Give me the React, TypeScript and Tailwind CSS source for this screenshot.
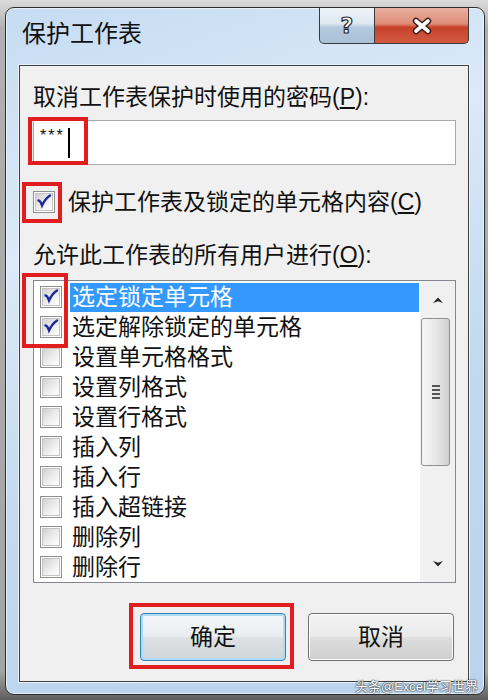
const items = [
  "选定锁定单元格",
  "选定解除锁定的单元格",
  "设置单元格格式",
  "设置列格式",
  "设置行格式",
  "插入列",
  "插入行",
  "插入超链接",
  "删除列",
  "删除行",
];

function CheckBox({ checked }: { checked?: boolean }) {
  return (
    <span className="flex h-[22px] w-[22px] shrink-0 items-center justify-center border border-[#8e8f8f] bg-white">
      <span className="flex h-[18px] w-[18px] items-center justify-center border border-[#c4c4c4] bg-gradient-to-br from-[#d0d0d0] via-[#ececec] to-white">
        {checked && (
          <svg width="16" height="16" viewBox="0 0 16 16">
            <path
              d="M2.5 6.5 Q4.5 6.8 6 11.5 Q9 5 14 1.5"
              fill="none"
              stroke="#1e2a9c"
              strokeWidth="2.4"
              strokeLinecap="round"
            />
          </svg>
        )}
      </span>
    </span>
  );
}

function RedBox({ className }: { className: string }) {
  return <div className={`pointer-events-none absolute border-4 border-[#e11d1d] ${className}`} />;
}

export default function App() {
  return (
    <div className="h-[700px] w-[488px] overflow-hidden bg-[linear-gradient(#dcdcdc,#b0b0b0_4%,#a4a4a4_96%,#5e5e5e)] pl-[5px] pt-[7px] font-['Liberation_Sans','Noto_Sans_CJK_SC',sans-serif] text-[#111]">
      <div className="relative flex h-[688px] w-[480px] flex-col rounded-[9px] border border-[#2e2e2e] bg-[linear-gradient(160deg,#c6dcf2,#dbe9f8_30%,#c2d9f0_60%,#b9d3ee)] shadow-[inset_0_0_0_1px_rgba(255,255,255,0.55)]">
        {/* Title bar */}
        <div className="flex h-[57px] shrink-0 items-start">
          <div className="pl-[16px] pt-[11px] text-[24px] leading-[30px]">保护工作表</div>
          <div className="ml-auto mr-[15px] flex h-[36px]">
            <div className="flex w-[56px] items-center justify-center rounded-bl-[5px] border border-t-0 border-[#3a3a3a] bg-[linear-gradient(#eef3f8,#dfe8f1_45%,#b4c9dd_55%,#a9c0d6)]">
              <span className="font-['DejaVu_Sans',sans-serif] text-[22px] font-bold leading-none text-white [-webkit-text-stroke:1.2px_#2a2a2a]">
                ?
              </span>
            </div>
            <div className="flex w-[94px] items-center justify-center rounded-br-[5px] border border-l-0 border-t-0 border-[#3a3a3a] bg-[linear-gradient(#eab0a2,#df8c78_45%,#c7412a_55%,#d15a41)]">
              <svg width="22" height="18" viewBox="0 0 22 18">
                <path d="M5 4 L17 14 M17 4 L5 14" stroke="#3b1a14" strokeWidth="6.5" strokeLinecap="round" />
                <path d="M5 4 L17 14 M17 4 L5 14" stroke="#ffffff" strokeWidth="3.6" strokeLinecap="round" />
              </svg>
            </div>
          </div>
        </div>

        {/* Client area */}
        <div className="ml-[13px] flex h-[617px] w-[450px] flex-col border border-[#404040] bg-[#f0f0f0] pl-[13px] pr-[12px] shadow-[0_0_0_1px_#e9f2fb]">
          <div className="mt-[16px] text-[23px] leading-[30px]">
            取消工作表保护时使用的密码(<span className="underline underline-offset-2">P</span>):
          </div>

          <div className="relative mt-[8px] flex h-[45px] items-start border border-[#a7a9ae] bg-white pl-[6px] pt-[7px]">
            <span className="text-[16px] leading-[16px] tracking-[2px]">***</span>
            <span className="ml-[3px] mt-[0px] h-[30px] w-[2px] bg-black" />
            <RedBox className="left-[-6px] top-[-4px] h-[48px] w-[60px]" />
          </div>

          <div className="relative mt-[22px] flex h-[30px] items-center gap-[13px]">
            <CheckBox checked />
            <span className="text-[23px] leading-[30px]">
              保护工作表及锁定的单元格内容(<span className="underline underline-offset-2">C</span>)
            </span>
            <RedBox className="left-[-11px] top-[-5px] h-[41px] w-[40px]" />
          </div>

          <div className="mt-[23px] text-[23px] leading-[30px]">
            允许此工作表的所有用户进行(<span className="underline underline-offset-2">O</span>):
          </div>

          <div className="relative mt-[10px] flex h-[303px] border border-[#828790] bg-white">
            <div className="flex flex-1 flex-col pt-[1px]">
              {items.map((item, i) => (
                <div key={item} className="flex h-[30px] items-center pl-[6px]">
                  <CheckBox checked={i < 2} />
                  <span
                    className={`ml-[8px] mr-[1px] flex h-[29px] flex-1 items-center pl-[2px] text-[23px] leading-[29px] ${
                      i === 0 ? "bg-[#3399ff] text-white" : ""
                    }`}
                  >
                    {item}
                  </span>
                </div>
              ))}
            </div>
            {/* Scrollbar */}
            <div className="flex w-[35px] flex-col bg-[#f0f0f0]">
              <div className="flex h-[37px] items-center justify-center">
                <svg width="12" height="8" viewBox="0 0 12 8">
                  <path d="M1 7 L6 1.5 L11 7 L6 5.2 Z" fill="#222" />
                </svg>
              </div>
              <div className="ml-[1px] flex h-[148px] w-[29px] items-center justify-center rounded-[3px] border border-[#8e8f8f] bg-[linear-gradient(90deg,#f6f6f6,#e6e6e6_55%,#cfcfcf)]">
                <div className="flex flex-col gap-[2px]">
                  <span className="h-[2px] w-[8px] bg-[#555]" />
                  <span className="h-[2px] w-[8px] bg-[#555]" />
                  <span className="h-[2px] w-[8px] bg-[#555]" />
                  <span className="h-[2px] w-[8px] bg-[#555]" />
                </div>
              </div>
              <div className="flex-1" />
              <div className="flex h-[36px] items-center justify-center">
                <svg width="12" height="8" viewBox="0 0 12 8">
                  <path d="M1 1 L6 6.5 L11 1 L6 2.8 Z" fill="#222" />
                </svg>
              </div>
            </div>
            <RedBox className="left-[-12px] top-[-8px] h-[75px] w-[46px]" />
          </div>

          <div className="mt-[30px] flex justify-end gap-[22px] pr-[2px]">
            <div className="relative">
              <button className="flex h-[48px] w-[146px] items-center justify-center rounded-[4px] border border-[#3c7fb1] bg-[linear-gradient(#f4f6f8,#eaeef1_48%,#dde1e4_52%,#d0d5d8)] text-[23px] shadow-[inset_0_0_0_2px_#a9dcf6]">
                确定
              </button>
              <RedBox className="left-[-11px] top-[-10px] h-[66px] w-[165px]" />
            </div>
            <button className="flex h-[48px] w-[146px] items-center justify-center rounded-[4px] border border-[#707070] bg-[linear-gradient(#f2f2f2,#ebebeb_48%,#dddddd_52%,#cfcfcf)] text-[23px] shadow-[inset_0_0_0_1px_#fcfcfc]">
              取消
            </button>
          </div>
        </div>

        <div className="absolute bottom-[0px] right-[6px] text-[13px] leading-[14px] text-white [text-shadow:0_0_2px_#333,0_0_1px_#000]">
          头条@Excel学习世界
        </div>
      </div>
    </div>
  );
}
